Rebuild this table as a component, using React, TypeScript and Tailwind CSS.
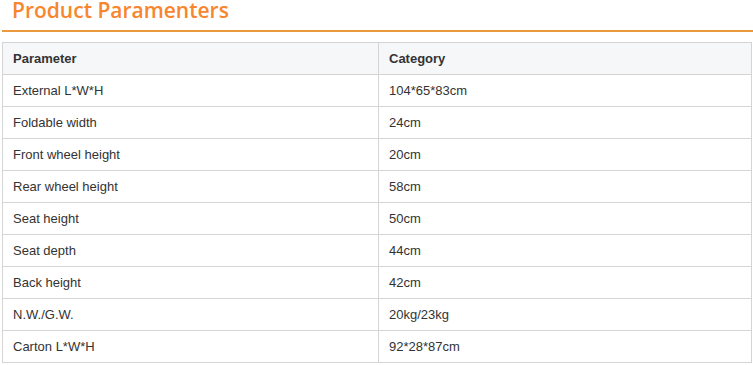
const rows: [string, string][] = [
  ['External L*W*H', '104*65*83cm'],
  ['Foldable width', '24cm'],
  ['Front wheel height', '20cm'],
  ['Rear wheel height', '58cm'],
  ['Seat height', '50cm'],
  ['Seat depth', '44cm'],
  ['Back height', '42cm'],
  ['N.W./G.W.', '20kg/23kg'],
  ['Carton L*W*H', '92*28*87cm'],
];

export default function App() {
  return (
    <div className="w-[753px] h-[365px] bg-white pl-[2px] overflow-hidden">
      <div className="border-b-2 border-[#e99a3c] h-[32px]">
        <h2
          className="pl-[10px] text-[21px] leading-[21px] font-semibold text-[#f7862f]"
          style={{ fontFamily: '"Open Sans", sans-serif' }}
        >
          Product Paramenters
        </h2>
      </div>
      <table
        className="mt-[10px] w-[750px] border-collapse text-[13px] text-[#333]"
        style={{ fontFamily: '"Liberation Sans", Arial, sans-serif' }}
      >
        <thead>
          <tr className="bg-[#f6f7f9] h-[32px]">
            <th className="border border-[#d4d4d4] text-left font-bold px-[10px] w-[376px]">Parameter</th>
            <th className="border border-[#d4d4d4] text-left font-bold px-[10px]">Category</th>
          </tr>
        </thead>
        <tbody>
          {rows.map(([k, v]) => (
            <tr key={k} className="h-[32px]">
              <td className="border border-[#d4d4d4] px-[10px]">{k}</td>
              <td className="border border-[#d4d4d4] px-[10px]">{v}</td>
            </tr>
          ))}
        </tbody>
      </table>
    </div>
  );
}
